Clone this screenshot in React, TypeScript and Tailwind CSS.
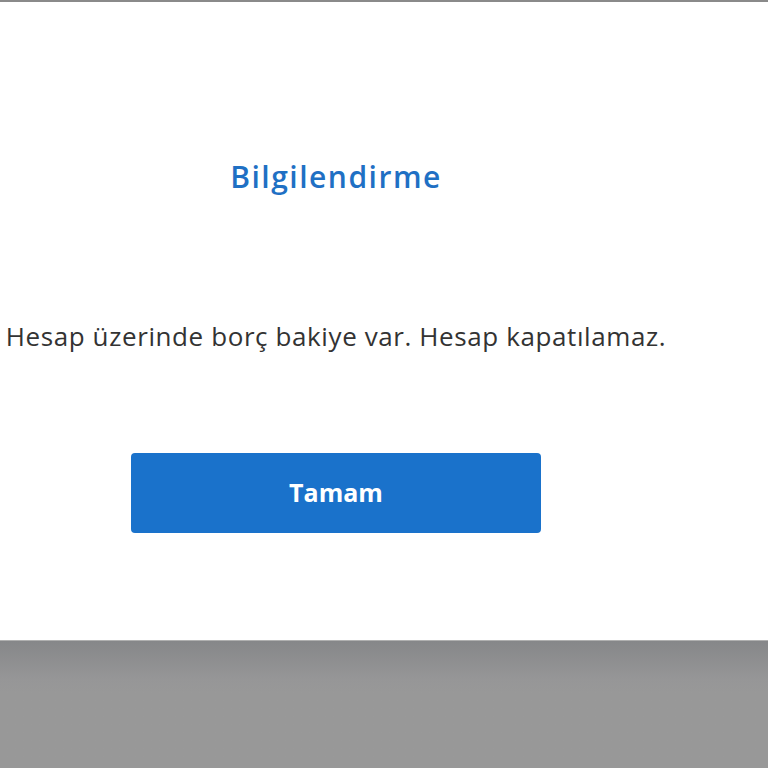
export default function App() {
  return (
    <div className="flex h-[768px] w-[768px] flex-col bg-[#989898] font-['Open_Sans',sans-serif]">
      {/* top strip */}
      <div className="h-[2px] bg-[#8a8a8a]" />

      {/* dialog panel */}
      <div className="h-[638px] bg-white">
        <div className="flex w-[672px] flex-col items-center">
          <h2 className="mt-[155px] text-[30px] font-semibold leading-[40px] tracking-[1.5px] text-[#1f70c4]">
            Bilgilendirme
          </h2>
          <p className="mt-[122px] whitespace-nowrap text-[26px] leading-[34px] tracking-[0.6px] text-[#333333]">
            Hesap üzerinde borç bakiye var. Hesap kapatılamaz.
          </p>
          <button className="mt-[100px] h-[80px] w-[410px] rounded-[4px] bg-[#1a72cb] text-[25px] font-bold text-white">
            Tamam
          </button>
        </div>
      </div>

      {/* backdrop with top shadow */}
      <div className="flex-1 border-t border-[#b0b0b0] bg-gradient-to-b from-[#868789] via-[#969697] via-30% to-[#989898] to-40%" />
    </div>
  );
}
